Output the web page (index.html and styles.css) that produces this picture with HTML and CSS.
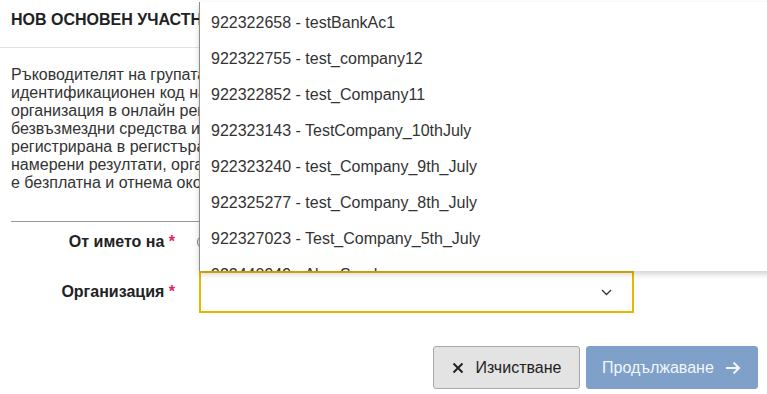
FILE: index.html
```html
<!DOCTYPE html>
<html lang="bg">
<head>
    <meta charset="UTF-8">
    <meta name="viewport" content="width=device-width, initial-scale=1.0">
    <title>Нов основен участник</title>
    <link rel="stylesheet" href="styles.css">
</head>
<body>
    <div class="modal">
        <div class="modal-header">НОВ ОСНОВЕН УЧАСТНИК</div>

        <div class="modal-body">
            <p class="intro">
                Ръководителят на групата/организацията трябва да въведе ЕИК/Булстат или друг единен<br>
                идентификационен код на организацията. Ако организацията не е регистрирана като<br>
                организация в онлайн регистъра, тя не може да кандидатства за получаване на<br>
                безвъзмездни средства и трябва първо да бъде регистрирана. Ако организацията е<br>
                регистрирана в регистъра, въведете ЕИК/Булстат и изберете от списъка. Ако няма<br>
                намерени резултати, организацията трябва да се регистрира. Регистрацията<br>
                е безплатна и отнема около 5 минути.
            </p>

            <div class="form-row">
                <label class="form-label">От името на <span class="req">*</span></label>
                <div class="form-field">
                    <label class="radio"><span class="radio-dot"></span>Организация</label>
                </div>
            </div>

            <div class="form-row">
                <label class="form-label">Организация <span class="req">*</span></label>
                <div class="form-field">
                    <div class="select open">
                        <span class="select-value"></span>
                        <svg class="chevron" width="11" height="7" viewBox="0 0 11 7">
                            <path d="M1 1 L5.5 5.5 L10 1" fill="none" stroke="#333" stroke-width="1.3"/>
                        </svg>
                        <ul class="dropdown">
                            <li>922322658 - testBankAc1</li>
                            <li>922322755 - test_company12</li>
                            <li>922322852 - test_Company11</li>
                            <li>922323143 - TestCompany_10thJuly</li>
                            <li>922323240 - test_Company_9th_July</li>
                            <li>922325277 - test_Company_8th_July</li>
                            <li>922327023 - Test_Company_5th_July</li>
                            <li>922440949 - Alex Sandu</li>
                        </ul>
                    </div>
                </div>
            </div>
        </div>

        <div class="modal-footer">
            <button class="btn btn-clear">
                <svg width="12" height="12" viewBox="0 0 12 12">
                    <path d="M1.5 1.5 L10.5 10.5 M10.5 1.5 L1.5 10.5" stroke="#222" stroke-width="2"/>
                </svg>
                Изчистване
            </button>
            <button class="btn btn-next" disabled>
                Продължаване
                <svg width="16" height="14" viewBox="0 0 16 14">
                    <path d="M1 7 H14 M8.5 1.5 L14 7 L8.5 12.5" fill="none" stroke="#f2f5f9" stroke-width="2"/>
                </svg>
            </button>
        </div>
    </div>
</body>
</html>
```

FILE: styles.css
```css
body {
    margin: 0;
    font-family: "Liberation Sans", Arial, sans-serif;
    color: #333;
    background-color: #fff;
    overflow: hidden;
}

.modal {
    width: 767px;
}

.modal-header {
    height: 48px;
    line-height: 40px;
    padding: 0 11px;
    font-size: 16px;
    font-weight: bold;
    color: #222;
    white-space: nowrap;
    border-bottom: 1px solid #e2e2e2;
    box-sizing: border-box;
}

.modal-body {
    padding: 0 11px;
}

.intro {
    margin: 0;
    padding: 18px 0 29px;
    font-size: 16px;
    line-height: 18px;
    color: #333;
    white-space: nowrap;
    overflow: hidden;
    border-bottom: 1px solid #999;
}

.form-row {
    display: grid;
    grid-template-columns: 175px 435px;
    column-gap: 24px;
    align-items: center;
    margin-left: -11px;
}

.form-row:first-of-type {
    height: 40px;
}

.form-row + .form-row {
    margin-top: 9px;
}

.form-label {
    text-align: right;
    font-size: 16px;
    font-weight: bold;
    color: #222;
}

.req {
    color: #e0245e;
}

.radio {
    display: flex;
    align-items: center;
    gap: 8px;
    font-size: 16px;
    margin-left: -2px;
}

.radio-dot {
    width: 12px;
    height: 12px;
    border: 1px solid #777;
    border-radius: 50%;
}

.select {
    position: relative;
    height: 42px;
    border: 2px solid #e6b800;
    box-sizing: border-box;
    display: flex;
    align-items: center;
    justify-content: flex-end;
    padding-right: 20px;
}

.chevron {
    margin-top: 1px;
}

.dropdown {
    position: absolute;
    left: -2px;
    bottom: 100%;
    margin: 0 0 2px;
    padding: 3px 0 0;
    list-style: none;
    width: 575px;
    height: 269px;
    overflow: hidden;
    background-color: #fff;
    border-left: 1px solid #8c8c8c;
    box-shadow: 0 3px 6px rgba(0,0,0,0.18);
    box-sizing: border-box;
    z-index: 5;
}

.dropdown li {
    height: 36px;
    line-height: 36px;
    padding-left: 11px;
    font-size: 16px;
    color: #333;
    white-space: nowrap;
}

.modal-footer {
    display: flex;
    justify-content: flex-end;
    gap: 6px;
    padding: 33px 9px 0;
}

.btn {
    display: flex;
    align-items: center;
    height: 43px;
    padding: 0 15px;
    font-family: "Liberation Sans", Arial, sans-serif;
    font-size: 16px;
    border-radius: 3px;
    cursor: pointer;
}

.btn-clear {
    width: 147px;
    justify-content: center;
    gap: 12px;
    background-color: #e3e3e3;
    border: 1px solid #a8a8a8;
    color: #222;
}

.btn-next {
    width: 172px;
    gap: 11px;
    background-color: #7fa1c9;
    border: 1px solid #7fa1c9;
    color: #f2f5f9;
    cursor: not-allowed;
}
```
